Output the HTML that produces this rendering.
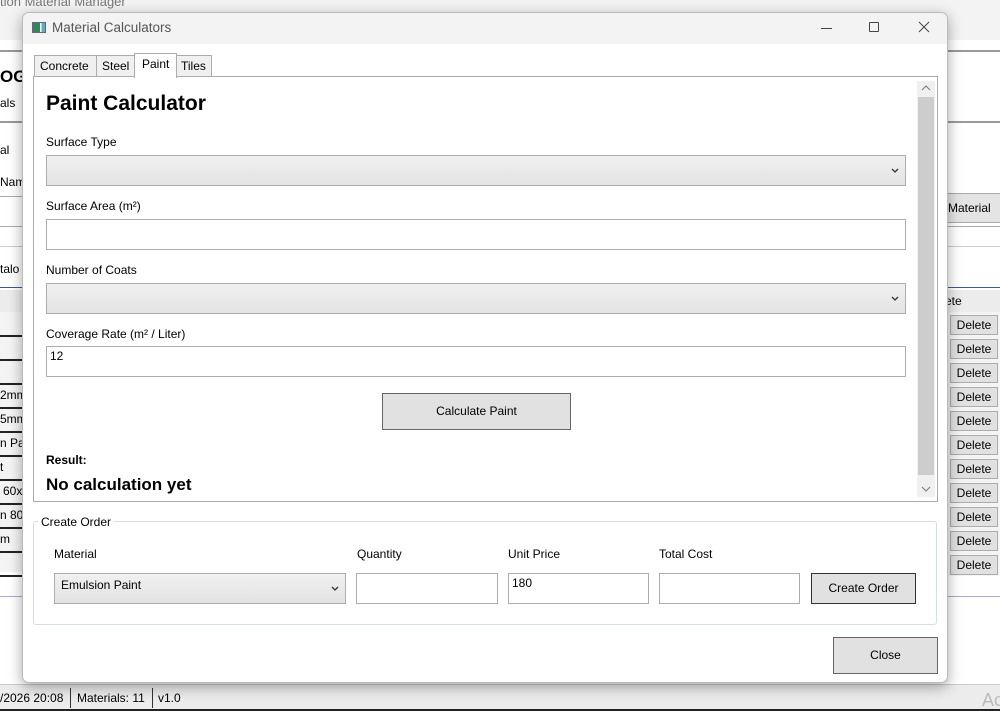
<!DOCTYPE html>
<html><head><meta charset="utf-8"><style>
*{box-sizing:border-box;margin:0;padding:0}
body{width:1000px;height:711px;overflow:hidden;background:#fff;font-family:"Liberation Sans",sans-serif;font-size:12px;color:#000;position:relative}
.a{position:absolute}
.bgt{position:absolute;font-size:12px;color:#000;white-space:nowrap}
.combo{position:absolute;background:linear-gradient(#f0f0f0,#e3e3e3);border:1px solid #acacac}
.combo svg{position:absolute;right:6px;top:50%;margin-top:-3px}
.tb{position:absolute;background:#fff;border:1px solid #abadb3}
.btn{position:absolute;background:#e1e1e1;border:1px solid #adadad;text-align:center}
.del{position:absolute;left:950px;width:48px;height:20px;background:#e1e1e1;border:1px solid #adadad;text-align:center;line-height:18px;font-size:12px}
.rowl{position:absolute;height:2px;background:#222}
</style></head><body>
<div class="a" style="left:0;top:0;width:1000px;height:40px;background:#f3f3f3"></div>
<div class="bgt" style="left:0;top:-6px;color:#777;font-size:13px">tion Material Manager</div>
<div class="a" style="left:0;top:50px;width:1000px;height:2px;background:#999"></div>
<div class="bgt" style="left:0;top:67px;font-weight:bold;font-size:17px">OG</div>
<div class="bgt" style="left:0;top:96px">als</div>
<div class="a" style="left:0;top:121px;width:1000px;height:2px;background:#999"></div>
<div class="bgt" style="left:0;top:143px">al</div>
<div class="bgt" style="left:0;top:175px">Nam</div>
<div class="a" style="left:0;top:196px;width:1000px;height:1px;background:#aaa"></div>
<div class="a" style="left:0;top:226px;width:1000px;height:1px;background:#aaa"></div>
<div class="a" style="left:945px;top:193px;width:55px;height:30px;background:#e4e4e4;border-top:1px solid #aaa;border-bottom:1px solid #aaa"></div>
<div class="bgt" style="left:948px;top:201px">Material</div>
<div class="a" style="left:0;top:246px;width:1000px;height:1px;background:#ccc"></div>
<div class="bgt" style="left:0;top:262px">talo</div>
<div class="a" style="left:0;top:287px;width:1000px;height:1px;background:#3b5b8a"></div>
<div class="a" style="left:0;top:290px;width:1000px;height:22px;background:#ececec"></div>
<div class="bgt" style="left:945px;top:294px">ete</div>
<div class="a" style="left:0;top:312px;width:22px;height:260px;background:#f4f4f4"></div>
<div class="rowl" style="left:0;top:335px;width:22px"></div><div class="rowl" style="left:0;top:359px;width:22px"></div>
<div class="rowl" style="left:0;top:383px;width:22px"></div><div class="rowl" style="left:0;top:407px;width:22px"></div>
<div class="rowl" style="left:0;top:431px;width:22px"></div><div class="rowl" style="left:0;top:455px;width:22px"></div>
<div class="rowl" style="left:0;top:479px;width:22px"></div><div class="rowl" style="left:0;top:503px;width:22px"></div>
<div class="rowl" style="left:0;top:527px;width:22px"></div><div class="rowl" style="left:0;top:551px;width:22px"></div>
<div class="rowl" style="left:0;top:575px;width:22px"></div>
<div class="bgt" style="left:0;top:388px">2mm</div><div class="bgt" style="left:0;top:412px">5mm</div>
<div class="bgt" style="left:0;top:436px">n Pa</div><div class="bgt" style="left:0;top:460px">t</div>
<div class="bgt" style="left:3px;top:484px">60x</div><div class="bgt" style="left:0;top:508px">n 80</div>
<div class="bgt" style="left:0;top:532px">m</div>
<div class="a" style="left:946px;top:312px;width:54px;height:264px;background:#f4f4f4"></div>
<div class="del" style="top:315px">Delete</div><div class="del" style="top:339px">Delete</div>
<div class="del" style="top:363px">Delete</div><div class="del" style="top:387px">Delete</div>
<div class="del" style="top:411px">Delete</div><div class="del" style="top:435px">Delete</div>
<div class="del" style="top:459px">Delete</div><div class="del" style="top:483px">Delete</div>
<div class="del" style="top:507px">Delete</div><div class="del" style="top:531px">Delete</div>
<div class="del" style="top:555px">Delete</div>
<div class="a" style="left:0;top:596px;width:1000px;height:1px;background:#aac"></div>
<div class="a" style="left:0;top:684px;width:1000px;height:27px;background:#ececec;border-top:1px solid #ccc"></div>
<div class="bgt" style="left:0;top:691px">/2026 20:08</div>
<div class="a" style="left:70px;top:688px;width:1px;height:20px;background:#333"></div>
<div class="bgt" style="left:77px;top:691px">Materials: 11</div>
<div class="a" style="left:152px;top:688px;width:1px;height:20px;background:#333"></div>
<div class="bgt" style="left:158px;top:691px">v1.0</div>
<div class="bgt" style="left:982px;top:690px;color:#bbb;font-size:18px">Ac</div>
<div class="a" style="left:0;top:709px;width:1000px;height:2px;background:#222"></div>

<div class="a" style="left:22px;top:12px;width:926px;height:671px;background:#fff;border:1px solid #bbb;border-radius:7px;box-shadow:0 4px 14px rgba(0,0,0,.35);overflow:hidden">
 <div class="a" style="left:0;top:0;width:926px;height:31px;background:#f3f3f3"></div>
 <div class="a" style="left:9px;top:9px;width:14px;height:11px;border:1px solid #667;background:linear-gradient(90deg,#2a8a5a 0 60%,#fff 60% 70%,#6ab 70%)"></div>
 <div class="bgt" style="left:29px;top:7px;color:#555;font-size:13.5px">Material Calculators</div>
 <div class="a" style="left:798px;top:15px;width:11px;height:1px;background:#444"></div>
 <div class="a" style="left:846px;top:9px;width:10px;height:10px;border:1px solid #444;border-radius:1px"></div>
 <svg class="a" style="left:895px;top:8px" width="12" height="12"><path d="M1 1L11 11M11 1L1 11" stroke="#444" stroke-width="1"/></svg>
</div>
<div class="a" style="left:34px;top:55px;width:63px;height:22px;background:#f0f0f0;border:1px solid #acacac"></div>
<div class="bgt" style="left:40px;top:59px">Concrete</div>
<div class="a" style="left:96px;top:55px;width:39px;height:22px;background:#f0f0f0;border:1px solid #acacac"></div>
<div class="bgt" style="left:102px;top:59px">Steel</div>
<div class="a" style="left:134px;top:53px;width:43px;height:25px;background:#fff;border:1px solid #acacac;border-bottom:none;z-index:2"></div>
<div class="bgt" style="left:142px;top:57px;z-index:3">Paint</div>
<div class="a" style="left:176px;top:55px;width:36px;height:22px;background:#f0f0f0;border:1px solid #acacac"></div>
<div class="bgt" style="left:181px;top:59px">Tiles</div>
<div class="a" style="left:33px;top:76px;width:905px;height:426px;border:1px solid #acacac;background:#fff"></div>
<div class="a" style="left:917px;top:81px;width:18px;height:416px;background:#f0f0f0"></div>
<div class="a" style="left:918px;top:97px;width:16px;height:378px;background:#cdcdcd"></div>
<svg class="a" style="left:921px;top:85px" width="10" height="6"><path d="M1 5L5 1L9 5" stroke="#777" fill="none"/></svg>
<svg class="a" style="left:921px;top:486px" width="10" height="6"><path d="M1 1L5 5L9 1" stroke="#777" fill="none"/></svg>
<div class="bgt" style="left:46px;top:92px;font-size:21px;font-weight:bold">Paint Calculator</div>
<div class="bgt" style="left:46px;top:135px">Surface Type</div>
<div class="combo" style="left:46px;top:155px;width:860px;height:31px"><svg width="8" height="5"><path d="M1 1L4 4L7 1" stroke="#333" stroke-width="1.3" fill="none"/></svg></div>
<div class="bgt" style="left:46px;top:199px">Surface Area (m²)</div>
<div class="tb" style="left:46px;top:219px;width:860px;height:31px"></div>
<div class="bgt" style="left:46px;top:263px">Number of Coats</div>
<div class="combo" style="left:46px;top:283px;width:860px;height:31px"><svg width="8" height="5"><path d="M1 1L4 4L7 1" stroke="#333" stroke-width="1.3" fill="none"/></svg></div>
<div class="bgt" style="left:46px;top:327px">Coverage Rate (m² / Liter)</div>
<div class="tb" style="left:46px;top:346px;width:860px;height:31px;padding:2px 0 0 3px">12</div>
<div class="btn" style="left:382px;top:393px;width:189px;height:37px;line-height:35px;border-color:#666">Calculate Paint</div>
<div class="bgt" style="left:46px;top:453px;font-weight:bold;font-size:12px">Result:</div>
<div class="bgt" style="left:46px;top:475px;font-size:17px;font-weight:bold">No calculation yet</div>
<div class="a" style="left:33px;top:521px;width:904px;height:104px;border:1px solid #d5dfe5;border-radius:3px"></div>
<div class="bgt" style="left:38px;top:515px;background:#fff;padding:0 3px">Create Order</div>
<div class="bgt" style="left:54px;top:547px">Material</div>
<div class="bgt" style="left:357px;top:547px">Quantity</div>
<div class="bgt" style="left:508px;top:547px">Unit Price</div>
<div class="bgt" style="left:659px;top:547px">Total Cost</div>
<div class="combo" style="left:54px;top:573px;width:292px;height:31px;padding:4px 0 0 6px">Emulsion Paint<svg width="8" height="5"><path d="M1 1L4 4L7 1" stroke="#333" stroke-width="1.3" fill="none"/></svg></div>
<div class="tb" style="left:356px;top:573px;width:142px;height:31px"></div>
<div class="tb" style="left:508px;top:573px;width:141px;height:31px;padding:2px 0 0 3px">180</div>
<div class="tb" style="left:659px;top:573px;width:141px;height:31px"></div>
<div class="btn" style="left:811px;top:573px;width:105px;height:31px;line-height:29px;border-color:#333">Create Order</div>
<div class="btn" style="left:833px;top:637px;width:105px;height:37px;line-height:35px;border-color:#666">Close</div>
</body></html>
